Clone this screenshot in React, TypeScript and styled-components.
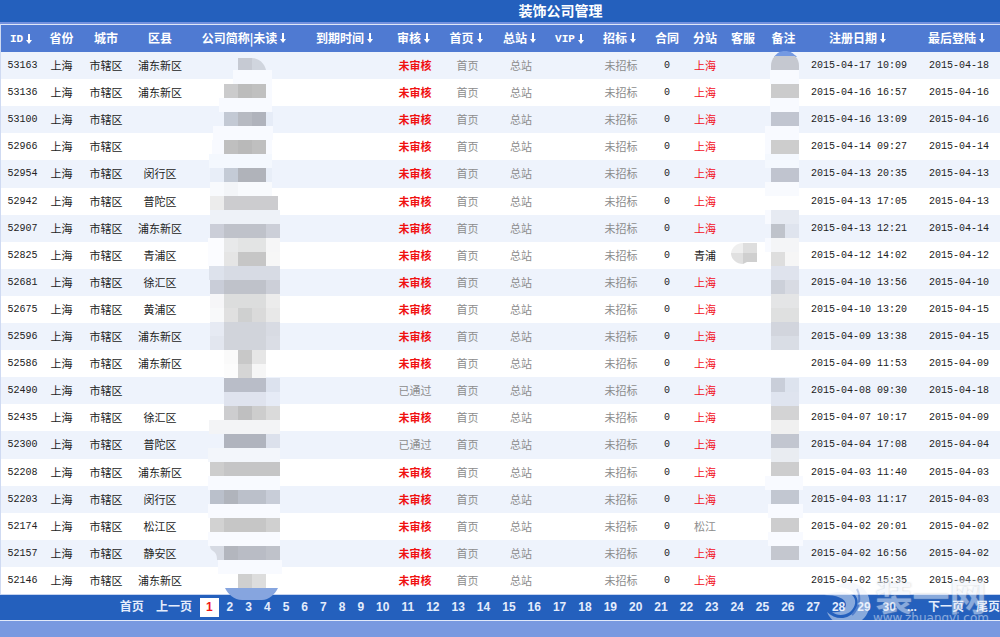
import React from "react";
import styled, { createGlobalStyle, css } from "styled-components";

const cjk = '"Noto Sans CJK SC", sans-serif';

const GlobalStyle = createGlobalStyle`
  *, *::before, *::after { box-sizing: border-box; }
  body {
    margin: 0;
    background: #7999e0;
    font-family: "Liberation Sans", ${cjk};
    font-size: 11px;
    color: #222;
    overflow-x: hidden;
  }
`;

const Page = styled.main`
  position: relative;
`;

const TitleBar = styled.h1`
  margin: 0;
  padding-left: 121px;
  height: 24px;
  line-height: 21px;
  border-bottom: 2px solid #7391df;
  background: #2460bd;
  color: #fff;
  font-family: ${cjk};
  font-size: 14px;
  font-weight: 700;
  text-align: center;
`;

const DataTable = styled.table`
  width: 100%;
  table-layout: fixed;
  border-collapse: separate;
  border-spacing: 0;
  border-top: 1px solid #dfe7f8;
  border-left: 1px solid #cfdaf2;
`;

const HeadCell = styled.th<{ $sort?: boolean }>`
  height: 27px;
  padding: 0 ${(p) => (p.$sort ? "3px" : "0")} 2px 0;
  background: #4f7ad2;
  color: #fff;
  font-family: ${cjk};
  font-size: 12px;
  font-weight: 700;
  line-height: 16px;
  white-space: nowrap;
  &:last-child { padding-left: 4px; }
`;

const SortButton = styled.button`
  display: inline-flex;
  align-items: center;
  justify-content: center;
  gap: 3px;
  padding: 0;
  border: 0;
  background: none;
  color: inherit;
  font: inherit;
  line-height: 16px;
  white-space: nowrap;
  cursor: pointer;
`;

const Latin = styled.span`
  font-family: "Liberation Mono", monospace;
  font-size: 11px;
`;

const Row = styled.tr`
  height: 27px;
  background: #fff;
  &:nth-child(odd) { background: #eef3fc; }
  &:nth-child(10n + 5) { height: 28px; }
`;

const Cell = styled.td<{ $mono?: boolean }>`
  position: relative;
  padding: 0 0 2px;
  text-align: center;
  line-height: 16px;
  white-space: nowrap;
  font-family: ${cjk};
  ${(p) =>
    p.$mono &&
    css`
      padding: 0;
      font-family: "Liberation Mono", monospace;
      font-size: 10px;
    `}
  &:last-child { padding-left: 6px; }
`;

type Tone = "alert" | "muted" | "plain" | "red";
const toneColor: Record<Tone, string> = {
  alert: "#f01010",
  red: "#f2101c",
  muted: "#8c8c8c",
  plain: "#222",
};

const CellLink = styled.a<{ $tone: Tone }>`
  color: ${(p) => toneColor[p.$tone]};
  font-weight: ${(p) => (p.$tone === "alert" ? 700 : 400)};
  text-decoration: none;
`;

const Mask = styled.svg<{ $half: number; $top: number }>`
  position: absolute;
  z-index: 2;
  top: ${(p) => p.$top}px;
  left: calc(50% - ${(p) => p.$half}px);
  pointer-events: none;
`;

const Pager = styled.nav`
  display: flex;
  align-items: center;
  justify-content: flex-end;
  height: 27px;
  border-top: 1px solid #c5d3ef;
  border-bottom: 1px solid #e3eafa;
  background: #2460bd;
  white-space: nowrap;
`;

const PageLink = styled.a<{ $current?: boolean }>`
  padding: 0 6px;
  color: #e4edfc;
  font-family: "Liberation Sans", ${cjk};
  font-size: 12px;
  font-weight: 700;
  line-height: 19px;
  text-decoration: none;
  ${(p) =>
    p.$current &&
    css`
      margin: 0 2px;
      background: #fff;
      color: #f01818;
    `}
  &:last-child { padding-right: 0; }
`;

const Ellipsis = styled.span`
  padding: 0 5px;
  color: #e4edfc;
  font-size: 12px;
  font-weight: 700;
  line-height: 19px;
`;

const Watermark = styled.div`
  position: absolute;
  z-index: 3;
  right: 11px;
  bottom: -6px;
  display: flex;
  align-items: flex-end;
  gap: 2px;
  opacity: 0.5;
  pointer-events: none;
`;

const WatermarkText = styled.div`
  display: flex;
  flex-direction: column;
  align-items: center;
  padding-bottom: 3px;
  color: #eef3fb;
`;

const WatermarkName = styled.span`
  font-family: ${cjk};
  font-size: 37px;
  font-weight: 700;
  line-height: 33px;
  text-shadow: 0 0 2px #8a93a3;
`;

const WatermarkUrl = styled.span`
  font-family: "DejaVu Sans", sans-serif;
  font-size: 12px;
  line-height: 12px;
`;

const Arrow = () => (
  <svg width="6" height="10" viewBox="0 0 6 10" aria-hidden="true">
    <path d="M2 0h2v6h2L3 10 0 6h2z" fill="#fff" />
  </svg>
);

type Block = [x: number, width: number, color: string];

const haze = "#f8faff";

/* One entry per 14px band of the pixelated company names. */
const companyBands: Block[][] = [
  [[33, 39, haze]],
  [[31, 41, haze], [24, 14, "#cbcbcc"], [38, 14, "#bcbcbc"], [52, 14, "#c0c0c0"]],
  [[19, 53, haze]],
  [[66, 7, "#e6ecf7"], [24, 14, "#c3c9d4"], [38, 14, "#b7bac2"], [52, 14, "#b0b3bc"]],
  [[13, 60, haze]],
  [[12, 60, haze], [24, 14, "#bfbfbf"], [38, 14, "#b9b9b9"], [52, 14, "#bfbfbf"]],
  [[9, 63, "#f4f8fe"]],
  [[10, 62, "#e8eef8"], [24, 14, "#c4cbd6"], [38, 28, "#b0b3ba"]],
  [[10, 62, "#f8fafd"], [24, 14, "#f3f5f8"]],
  [[10, 14, "#ececec"], [24, 54, "#cccccf"]],
  [[10, 70, "#eef2f8"]],
  [[10, 14, "#cbced8"], [24, 42, "#bfc2ca"], [66, 14, "#cccfd8"]],
  [[8, 16, "#fbfcff"], [24, 14, "#e8e9ea"], [38, 28, "#e3e4e4"], [66, 14, "#f6f6f7"]],
  [[8, 16, "#fbfcff"], [24, 14, "#e5e5e5"], [38, 28, "#c6c6c6"], [66, 14, "#f7f7f7"]],
  [[9, 15, "#dde2ec"], [24, 56, "#d7dbe4"]],
  [[10, 14, "#c9cdd8"], [24, 42, "#bfc2ca"], [66, 14, "#cccfd8"]],
  [[10, 14, "#f6f6f8"], [24, 42, "#dcdddd"], [66, 14, "#ececec"]],
  [[10, 14, "#f8f9fa"], [24, 14, "#e0e0e0"], [38, 14, "#cfd0d0"], [52, 14, "#dadada"], [66, 14, "#e8e8e8"]],
  [[10, 14, "#e6eaf3"], [24, 42, "#d1d4db"], [66, 14, "#d8dbe3"]],
  [[10, 14, "#e2e6ef"], [24, 42, "#d1d4db"], [66, 14, "#dadde5"]],
  [[24, 14, "#fafafa"], [38, 14, "#c8c8c8"], [52, 14, "#e6e6e6"]],
  [[24, 14, "#fcfcfc"], [38, 14, "#d5d5d5"], [52, 14, "#f6f6f6"]],
  [[24, 42, "#b9bdc8"], [66, 14, "#dce2ee"]],
  [[24, 42, "#dfe3ee"], [66, 14, "#e6ebf6"]],
  [[24, 14, "#cdcdcf"], [38, 14, "#bfbfc0"], [52, 14, "#cdcdcd"], [66, 14, "#dadada"]],
  [[9, 71, "#f3f4f6"]],
  [[24, 42, "#b0b4be"], [66, 14, "#dce1ec"]],
  [[8, 72, "#f3f6fb"]],
  [[10, 14, "#cdcdcd"], [24, 56, "#c5c5c6"]],
  [[8, 72, haze]],
  [[10, 14, "#bac0cb"], [24, 14, "#b0b4bc"], [38, 28, "#bbc0ca"], [66, 14, "#c8cdd8"]],
  [[8, 72, haze]],
  [[10, 14, "#d2d2d2"], [24, 42, "#c6c6c6"], [66, 14, "#d0d0d0"]],
  [[8, 72, haze]],
  [[24, 14, "#b3b6be"], [38, 28, "#b9bcc5"], [66, 14, "#bfc2ca"]],
  [[18, 64, haze]],
  [[38, 14, "#cfcfcf"], [52, 14, "#dddddd"]],
];

/* Bands of the pixelated remarks column. */
const remarkBands: Block[][] = [
  [[5, 29, haze]],
  [[6, 28, "#cbcbcc"]],
  [[5, 29, haze]],
  [[6, 28, "#c1c5d0"]],
  [[0, 34, haze]],
  [[0, 34, haze], [6, 28, "#cdcdcd"]],
  [[0, 34, "#f4f8fe"]],
  [[6, 28, "#c0c4cf"]],
  [[0, 34, "#f8fafe"]],
  [],
  [[0, 6, haze], [6, 28, "#e6eaf2"]],
  [[6, 14, "#bfc3cb"], [20, 14, "#dfe4ee"]],
  [[0, 6, haze], [6, 28, "#f4f5f7"]],
  [[6, 14, "#dedede"], [20, 14, "#f6f6f6"]],
  [[6, 28, "#dfe3ed"]],
  [[6, 14, "#ccd0d9"], [20, 14, "#d8dbe3"]],
  [[6, 28, "#e4e5e6"]],
  [[6, 28, "#dfe0e0"]],
  [[6, 28, "#d2d5dd"]],
  [[6, 28, "#d9dde5"]],
  [],
  [],
  [[6, 14, "#c9ced9"], [20, 14, "#dde3ee"]],
  [[6, 28, "#dfe4ef"]],
  [[6, 28, "#d3d3d4"]],
  [[6, 28, "#f0f0f0"]],
  [[6, 28, "#c2c6d0"]],
  [[6, 28, "#e9ecf1"]],
  [[6, 28, "#cdcdce"]],
  [[0, 38, haze]],
  [[6, 28, "#c2c7d1"]],
  [[3, 35, haze]],
  [[6, 28, "#cdcdce"]],
  [[3, 35, haze]],
  [[6, 28, "#c4c7cf"]],
];

const Bands = ({ bands }: { bands: Block[][] }) => (
  <>
    {bands.map((band, i) =>
      band.map(([x, w, color]) => (
        <rect key={`${i}-${x}`} x={x} y={18 + i * 14} width={w} height={14} fill={color} />
      )),
    )}
  </>
);

const CompanyMask = () => (
  <Mask $half={46} $top={0} width="90" height="550" viewBox="0 0 90 550" aria-hidden="true">
    <rect x="38" y="6" width="14" height="12" fill="#c6cad3" />
    <path d="M52 6c6 0 12 4 14 12H52z" fill="#d0d5de" />
    <Bands bands={companyBands} />
    <path d="M10 494h14v14h-7c0-5-1-7-4-9-2-1-3-3-3-5z" fill="#d6dae3" />
    <path d="M25 536h53c-3 6-9 12-16 12H42c-8 0-14-6-17-12z" fill="#86a5df" />
  </Mask>
);

const RemarkMask = () => (
  <Mask $half={19} $top={-1} width="40" height="520" viewBox="0 -1 40 520" aria-hidden="true">
    <path d="M9 5c3-4 6-6 11-6s8 2 12 6z" fill="#7499e2" />
    <path d="M6 18v-4c0-4 1-7 4-10h20c3 3 4 6 4 10v4z" fill="#c5c8d0" />
    <Bands bands={remarkBands} />
  </Mask>
);

const ServiceMask = () => (
  <Mask $half={12} $top={1} width="26" height="22" viewBox="0 0 26 22" aria-hidden="true">
    <path d="M0 10C1 4 6 0 12 0v10z" fill="#efefef" />
    <path d="M0 10h12v11C5 21 0 16 0 10z" fill="#e0e0e0" />
    <path d="M12 0h14v10H12z" fill="#dedede" />
    <path d="M12 10h14v9H16l-4 2z" fill="#cfcfcf" />
  </Mask>
);

const columns: { label: string; width: number; sort?: boolean }[] = [
  { label: "ID", width: 43, sort: true },
  { label: "省份", width: 35 },
  { label: "城市", width: 54 },
  { label: "区县", width: 54 },
  { label: "公司简称|未读", width: 117, sort: true },
  { label: "到期时间", width: 84, sort: true },
  { label: "审核", width: 54, sort: true },
  { label: "首页", width: 51, sort: true },
  { label: "总站", width: 56, sort: true },
  { label: "VIP", width: 44, sort: true },
  { label: "招标", width: 56, sort: true },
  { label: "合同", width: 36 },
  { label: "分站", width: 40 },
  { label: "客服", width: 36 },
  { label: "备注", width: 45 },
  { label: "注册日期", width: 106, sort: true },
  { label: "最后登陆", width: 88, sort: true },
];

type Company = [id: string, county: string, registered: string, lastLogin: string, passed?: boolean, branch?: string];

const companies: Company[] = [
  ["53163", "浦东新区", "2015-04-17 10:09", "2015-04-18"],
  ["53136", "浦东新区", "2015-04-16 16:57", "2015-04-16"],
  ["53100", "", "2015-04-16 13:09", "2015-04-16"],
  ["52966", "", "2015-04-14 09:27", "2015-04-14"],
  ["52954", "闵行区", "2015-04-13 20:35", "2015-04-13"],
  ["52942", "普陀区", "2015-04-13 17:05", "2015-04-13"],
  ["52907", "浦东新区", "2015-04-13 12:21", "2015-04-14"],
  ["52825", "青浦区", "2015-04-12 14:02", "2015-04-12", false, "青浦"],
  ["52681", "徐汇区", "2015-04-10 13:56", "2015-04-10"],
  ["52675", "黄浦区", "2015-04-10 13:20", "2015-04-15"],
  ["52596", "浦东新区", "2015-04-09 13:38", "2015-04-15"],
  ["52586", "浦东新区", "2015-04-09 11:53", "2015-04-09"],
  ["52490", "", "2015-04-08 09:30", "2015-04-18", true],
  ["52435", "徐汇区", "2015-04-07 10:17", "2015-04-09"],
  ["52300", "普陀区", "2015-04-04 17:08", "2015-04-04", true],
  ["52208", "浦东新区", "2015-04-03 11:40", "2015-04-03"],
  ["52203", "闵行区", "2015-04-03 11:17", "2015-04-03"],
  ["52174", "松江区", "2015-04-02 20:01", "2015-04-02", false, "松江"],
  ["52157", "静安区", "2015-04-02 16:56", "2015-04-02"],
  ["52146", "浦东新区", "2015-04-02 15:35", "2015-04-03"],
];

const branchTone = (branch: string): Tone =>
  branch === "上海" ? "red" : branch === "青浦" ? "plain" : "muted";

const HeadLabel = ({ label }: { label: string }) =>
  /^[A-Z]+$/.test(label) ? <Latin>{label}</Latin> : <span>{label}</span>;

const CompanyRow = ({ company, index }: { company: Company; index: number }) => {
  const [id, county, registered, lastLogin, passed, branch = "上海"] = company;
  return (
    <Row>
      <Cell $mono>{id}</Cell>
      <Cell>上海</Cell>
      <Cell>市辖区</Cell>
      <Cell>{county}</Cell>
      <Cell>{index === 0 && <CompanyMask />}</Cell>
      <Cell />
      <Cell>
        <CellLink href="#audit" $tone={passed ? "muted" : "alert"}>{passed ? "已通过" : "未审核"}</CellLink>
      </Cell>
      <Cell><CellLink href="#home" $tone="muted">首页</CellLink></Cell>
      <Cell><CellLink href="#main" $tone="muted">总站</CellLink></Cell>
      <Cell />
      <Cell><CellLink href="#tender" $tone="muted">未招标</CellLink></Cell>
      <Cell $mono>0</Cell>
      <Cell><CellLink href="#branch" $tone={branchTone(branch)}>{branch}</CellLink></Cell>
      <Cell>{branch === "青浦" && <ServiceMask />}</Cell>
      <Cell>{index === 0 && <RemarkMask />}</Cell>
      <Cell $mono>{registered}</Cell>
      <Cell $mono>{lastLogin}</Cell>
    </Row>
  );
};

const Logo = () => (
  <svg width="47" height="46" viewBox="0 0 47 46" aria-hidden="true">
    <path d="M17 3C27-1 40 4 44 14c5 13-2 27-16 30C17 46 7 41 3 31c6 6 15 8 22 4 9-5 11-15 6-21C28 9 22 6 12 6z" fill="#eef3fb" />
    <path d="M0 14c8-3 21-5 28 0 5 4 4 12-2 17-6 4-13 4-18 0 8 1 13-2 14-7 0-7-10-10-22-10z" fill="#eef3fb" />
    <path d="M33 8c4 8 3 18-5 26" fill="none" stroke="#7d9bd8" strokeWidth="2" />
  </svg>
);

const pages = Array.from({ length: 30 }, (_, i) => i + 1);

export default function App() {
  return (
    <>
      <GlobalStyle />
      <Page>
        <TitleBar>装饰公司管理</TitleBar>
        <DataTable>
          <colgroup>
            {columns.map((c) => (
              <col key={c.label} style={{ width: c.width }} />
            ))}
          </colgroup>
          <thead>
            <tr>
              {columns.map((c) => (
                <HeadCell key={c.label} scope="col" $sort={c.sort}>
                  {c.sort ? (
                    <SortButton type="button">
                      <HeadLabel label={c.label} />
                      <Arrow />
                    </SortButton>
                  ) : (
                    c.label
                  )}
                </HeadCell>
              ))}
            </tr>
          </thead>
          <tbody>
            {companies.map((c, i) => (
              <CompanyRow key={c[0]} company={c} index={i} />
            ))}
          </tbody>
        </DataTable>
        <Pager aria-label="分页">
          <PageLink href="#first">首页</PageLink>
          <PageLink href="#prev">上一页</PageLink>
          {pages.map((n) => (
            <PageLink key={n} href={`#page-${n}`} $current={n === 1} aria-current={n === 1 ? "page" : undefined}>
              {n}
            </PageLink>
          ))}
          <Ellipsis>...</Ellipsis>
          <PageLink href="#next">下一页</PageLink>
          <PageLink href="#last">尾页</PageLink>
        </Pager>
        <Watermark>
          <Logo />
          <WatermarkText>
            <WatermarkName>装一网</WatermarkName>
            <WatermarkUrl>www.zhuangyi.com</WatermarkUrl>
          </WatermarkText>
        </Watermark>
      </Page>
    </>
  );
}
